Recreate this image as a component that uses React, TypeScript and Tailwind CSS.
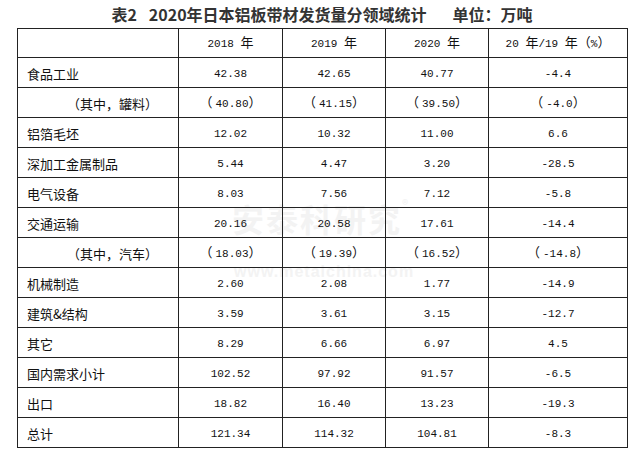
import React from 'react';

type Row = { label: string; sub?: boolean; values: string[] };

const rows: Row[] = [
  { label: '食品工业', values: ['42.38', '42.65', '40.77', '-4.4'] },
  { label: '（其中，罐料）', sub: true, values: ['（40.80）', '（41.15）', '（39.50）', '（-4.0）'] },
  { label: '铝箔毛坯', values: ['12.02', '10.32', '11.00', '6.6'] },
  { label: '深加工金属制品', values: ['5.44', '4.47', '3.20', '-28.5'] },
  { label: '电气设备', values: ['8.03', '7.56', '7.12', '-5.8'] },
  { label: '交通运输', values: ['20.16', '20.58', '17.61', '-14.4'] },
  { label: '（其中，汽车）', sub: true, values: ['（18.03）', '（19.39）', '（16.52）', '（-14.8）'] },
  { label: '机械制造', values: ['2.60', '2.08', '1.77', '-14.9'] },
  { label: '建筑&结构', values: ['3.59', '3.61', '3.15', '-12.7'] },
  { label: '其它', values: ['8.29', '6.66', '6.97', '4.5'] },
  { label: '国内需求小计', values: ['102.52', '97.92', '91.57', '-6.5'] },
  { label: '出口', values: ['18.82', '16.40', '13.23', '-19.3'] },
  { label: '总计', values: ['121.34', '114.32', '104.81', '-8.3'] },
];

const cjk = "font-['Noto_Sans_CJK_SC',sans-serif]";
const mono = "font-['Liberation_Mono','Noto_Sans_CJK_SC',monospace]";

// splits full-width parens off so digits stay in the narrow font
function Num({ v }: { v: string }) {
  const m = v.match(/^（(.*)）$/);
  if (!m) return <span className={`${mono} text-[11px]`}>{v}</span>;
  return (
    <span>
      <span className={`${cjk} text-[13px] mr-[3px]`}>（</span>
      <span className={`${mono} text-[11px]`}>{m[1]}</span>
      <span className={`${cjk} text-[13px]`}>）</span>
    </span>
  );
}

function Year({ y }: { y: string }) {
  return (
    <span>
      <span className={`${mono} text-[11px]`}>{y} </span>
      <span className={`${cjk} text-[13px]`}>年</span>
    </span>
  );
}

const cell = 'border border-[#222] align-bottom pb-[5px] leading-[16px] p-0';

export default function App() {
  return (
    <div className="relative w-[644px] h-[455px] bg-white overflow-hidden text-[#111]">
      {/* watermark */}
      <div className={`absolute left-[232px] top-[198px] ${cjk} font-bold text-[32px] leading-[40px] tracking-[2px] text-[#f3f3f3] pointer-events-none select-none`}>
        安泰科研究<span className="text-[12px] align-top leading-[12px]">®</span>
      </div>
      <div className="absolute left-[234px] top-[263px] font-['Liberation_Sans',sans-serif] font-bold text-[16px] leading-[18px] tracking-[1px] text-[#f3f3f3] pointer-events-none select-none">
        www.metalchina.com
      </div>

      <div className="relative">
        <div className={`h-[28px] flex items-center justify-center ${cjk} font-bold text-[16px] text-[#333]`}>
          <span>表2</span>
          <span className="ml-[12px]">2020年日本铝板带材发货量分领域统计</span>
          <span className="ml-[26px]">单位：万吨</span>
        </div>

        <table className="ml-[17px] w-[610px] table-fixed border-collapse">
          <colgroup>
            <col className="w-[161px]" />
            <col className="w-[104px]" />
            <col className="w-[103px]" />
            <col className="w-[103px]" />
            <col className="w-[139px]" />
          </colgroup>
          <thead>
            <tr className="h-[29px]">
              <th className={cell}></th>
              <th className={`${cell} font-normal text-center`}><Year y="2018" /></th>
              <th className={`${cell} font-normal text-center`}><Year y="2019" /></th>
              <th className={`${cell} font-normal text-center`}><Year y="2020" /></th>
              <th className={`${cell} font-normal text-center`}>
                <span className={`${mono} text-[11px]`}>20 </span>
                <span className={`${cjk} text-[13px]`}>年</span>
                <span className={`${mono} text-[11px]`}>/19 </span>
                <span className={`${cjk} text-[13px]`}>年（</span>
                <span className={`${mono} text-[11px]`}>%</span>
                <span className={`${cjk} text-[13px]`}>）</span>
              </th>
            </tr>
          </thead>
          <tbody>
            {rows.map((r) => (
              <tr key={r.label} className="h-[30px]">
                <td className={`${cell} ${cjk} text-[13px] ${r.sub ? 'pl-[49px]' : 'pl-[9px]'}`}>{r.label}</td>
                {r.values.map((v, i) => (
                  <td key={i} className={`${cell} text-center`}>
                    <Num v={v} />
                  </td>
                ))}
              </tr>
            ))}
          </tbody>
        </table>
      </div>
    </div>
  );
}
